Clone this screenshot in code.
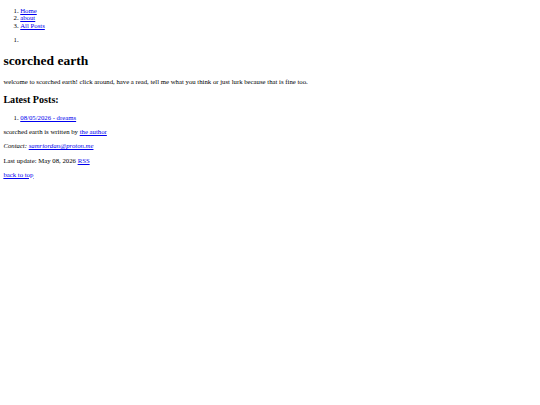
export default function App() {
  const link = "text-[#0000ee] underline";
  const list = "list-decimal pl-[16.875px] my-[6.75px]";
  const para = "my-[6.75px]";
  return (
    <div className="m-[3.375px] font-['Liberation_Serif',serif] text-[6.75px] leading-[7.6px] text-black">
      <nav>
        <ol className={list}>
          <li><a href="#" className={link}>Home</a></li>
          <li><a href="#" className={link}>about</a></li>
          <li><a href="#" className={link}>All Posts</a></li>
        </ol>
        <ol className={list}>
          <li></li>
        </ol>
      </nav>
      <main>
        <h1 className="text-[13.5px] leading-[15.6px] font-bold my-[9.05px]">scorched earth</h1>
        <p className={para}>
          welcome to scorched earth! click around, have a read, tell me what you think or just lurk because that is fine too.
        </p>
        <h2 className="text-[10.125px] leading-[11.6px] font-bold my-[8.4px]">Latest Posts:</h2>
        <ol className={list}>
          <li><a href="#" className={link}>08/05/2026 - dreams</a></li>
        </ol>
      </main>
      <footer>
        <p className={para}>
          scorched earth is written by <a href="#" className={link}>the author</a>
        </p>
        <p className={para}>
          <i className="italic">Contact: <a href="#" className={link}>samriordan@proton.me</a></i>
        </p>
        <p className={para}>
          Last update: May 08, 2026 <a href="#" className={link}>RSS</a>
        </p>
        <p className={para}>
          <a href="#" className={link}>back to top</a>
        </p>
      </footer>
    </div>
  );
}
